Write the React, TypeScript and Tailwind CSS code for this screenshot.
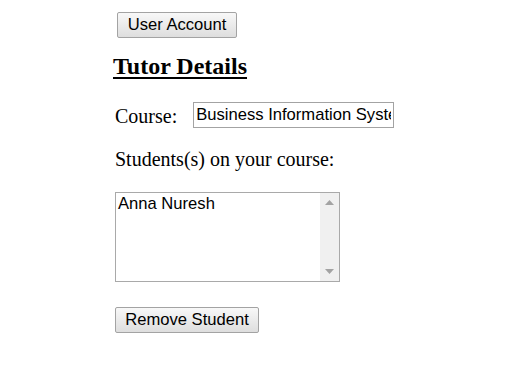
const btn =
  "h-[26px] border border-[#a3a3a3] rounded-[2px] bg-gradient-to-b from-[#f8f8f8] to-[#dedede] text-[16.6px] leading-none text-black font-['Liberation_Sans',Arial,sans-serif] px-[8px]";

const App = () => {
  return (
    <div className="w-[531px] h-[370px] bg-white font-['Liberation_Serif','Times_New_Roman',serif] text-black">
      <div className="pl-[115px] pt-[12px] flex flex-col items-start">
        <button className={btn + " ml-[2px] w-[120px]"}>User Account</button>

        <h2 className="mt-[14px] -ml-[2px] text-[24px] leading-[28px] font-bold underline decoration-[2px] underline-offset-[3px]">
          Tutor Details
        </h2>

        <div className="mt-[22px] flex items-start gap-[16px]">
          <span className="mt-[4px] text-[20px] leading-[20px]">Course:</span>
          <input
            readOnly
            value="Business Information Systems"
            className="w-[201px] h-[26px] border border-[#a3a3a3] px-[2px] text-[16.6px] font-['Liberation_Sans',Arial,sans-serif] outline-none"
          />
        </div>

        <p className="mt-[21px] text-[20px] leading-[20px]">Students(s) on your course:</p>

        <div className="mt-[23px] w-[225px] h-[90px] border border-[#a9a9a9] flex">
          <div className="flex-1 pl-[2px] pt-[1px] text-[16.6px] leading-[19px] font-['Liberation_Sans',Arial,sans-serif]">
            Anna Nuresh
          </div>
          <div className="w-[19px] bg-[#f0f0f0] flex flex-col items-center justify-between py-[7px]">
            <svg width="9" height="5" viewBox="0 0 9 5">
              <path d="M4.5 0L9 5H0z" fill="#a3a3a3" />
            </svg>
            <svg width="9" height="5" viewBox="0 0 9 5">
              <path d="M0 0H9L4.5 5z" fill="#a3a3a3" />
            </svg>
          </div>
        </div>

        <button className={btn + " mt-[25px] w-[144px]"}>Remove Student</button>
      </div>
    </div>
  );
};

export default App;
